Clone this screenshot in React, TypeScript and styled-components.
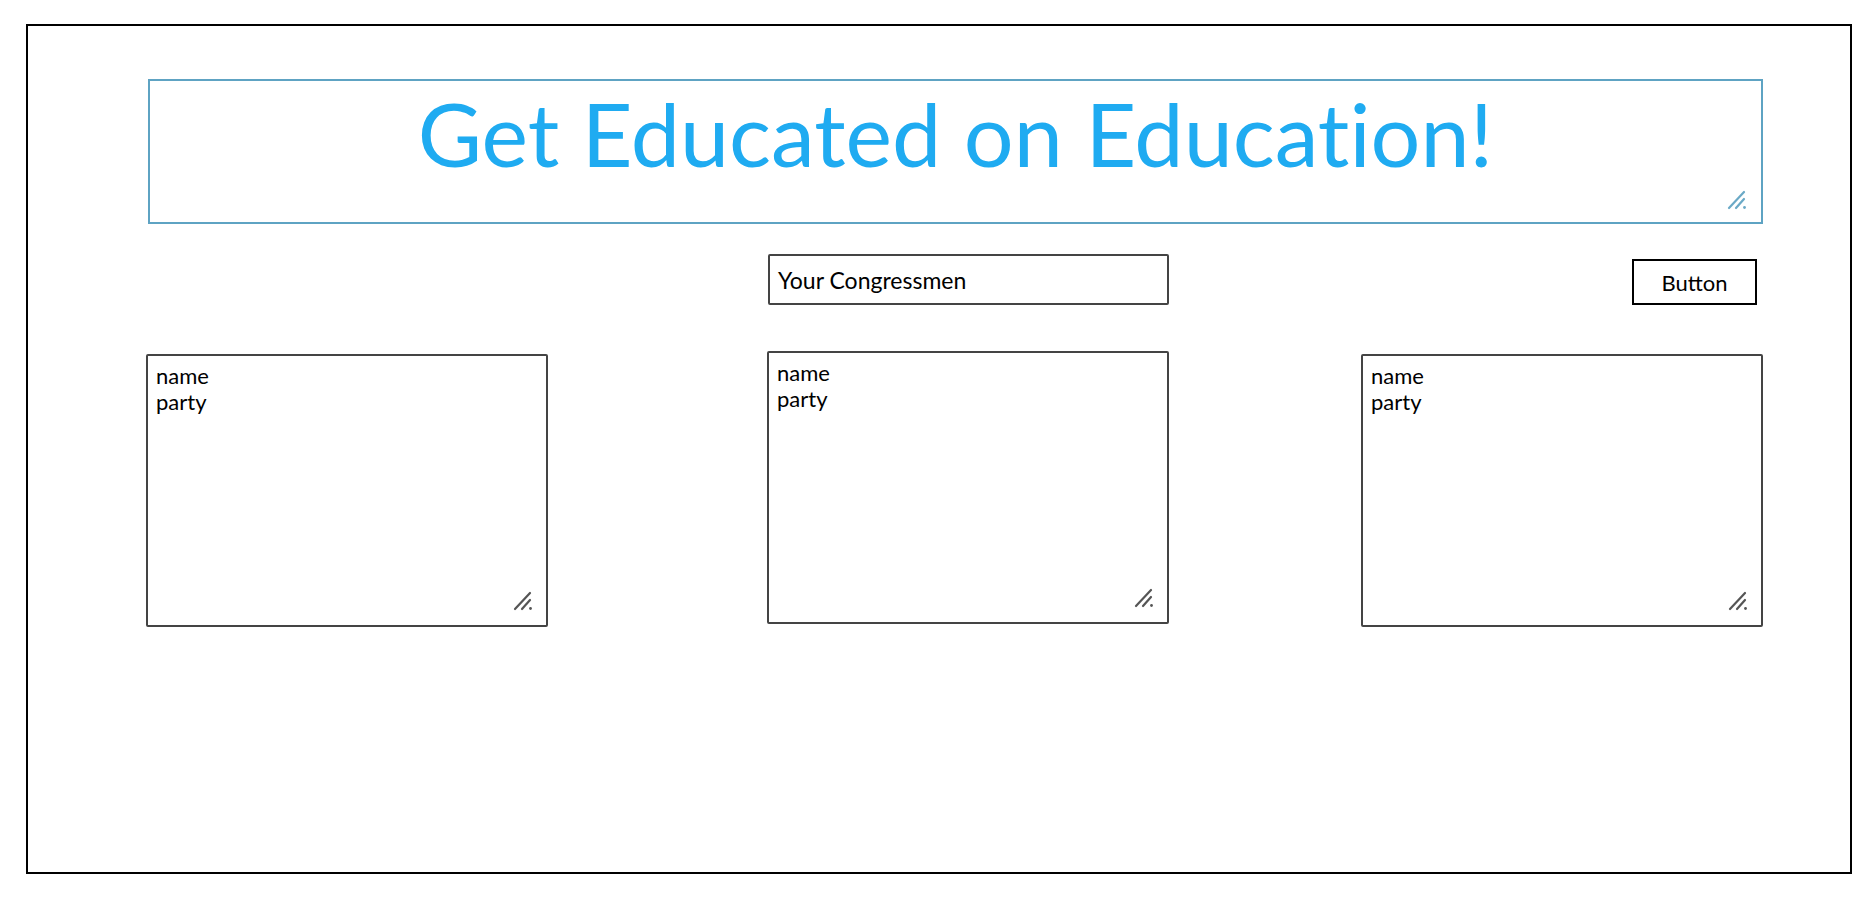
import React from "react";
import styled, { createGlobalStyle } from "styled-components";

const Global = createGlobalStyle`
  html, body { margin: 0; padding: 0; background: #fff; }
  body {
    font-family: Lato, "Noto Sans", sans-serif;
    color: #000;
    font-variant-ligatures: none;
    font-feature-settings: "liga" 0;
  }
`;

const Page = styled.div`
  padding: 24px 20px 34px 26px;
`;

const Frame = styled.div`
  box-sizing: border-box;
  width: 1826px;
  height: 850px;
  border: 2px solid #000;
  padding: 53px 0 0 118px;
  display: flex;
  flex-direction: column;
`;

const Content = styled.div`
  width: 1617px;
  display: flex;
  flex-direction: column;
`;

const Header = styled.div`
  position: relative;
  box-sizing: border-box;
  margin-left: 2px;
  width: 1615px;
  height: 145px;
  border: 2px solid #5ea3c3;
  display: flex;
  justify-content: center;
`;

const Title = styled.h1`
  margin: 0;
  font-family: Lato, "Noto Sans", sans-serif;
  font-weight: 400;
  font-size: 88px;
  line-height: 1.2;
  color: #1fabf1;
  font-variant-ligatures: none;
  font-feature-settings: "liga" 0;
`;

const Grip = styled.svg<{ $right: number; $bottom: number }>`
  position: absolute;
  right: ${(p) => p.$right}px;
  bottom: ${(p) => p.$bottom}px;
  width: 20px;
  height: 20px;
`;

const ControlsRow = styled.div`
  margin-top: 30px;
  height: 51px;
  display: flex;
  align-items: flex-end;
`;

const SearchBox = styled.div`
  box-sizing: border-box;
  margin-left: 622px;
  width: 401px;
  height: 51px;
  border: 2px solid #444;
  border-radius: 2px;
  padding-left: 8px;
  display: flex;
  align-items: center;
  font-size: 23px;
`;

const Button = styled.button`
  box-sizing: border-box;
  margin-left: auto;
  margin-right: 6px;
  width: 125px;
  height: 46px;
  border: 2px solid #000;
  border-radius: 0;
  background: #fff;
  font-family: Lato, "Noto Sans", sans-serif;
  font-size: 22px;
  color: #000;
  padding: 0;
`;

const CardsRow = styled.div`
  margin-top: 46px;
  display: flex;
  align-items: flex-start;
`;

const Card = styled.div<{ $offsetX: number; $offsetY: number }>`
  position: relative;
  box-sizing: border-box;
  margin-left: ${(p) => p.$offsetX}px;
  margin-top: ${(p) => p.$offsetY}px;
  width: 402px;
  height: 273px;
  border: 2px solid #444;
  border-radius: 2px;
  padding: 7px 8px;
  font-size: 22px;
  line-height: 1.2;
`;

const Line = styled.div``;

function ResizeGrip({ color, right, bottom }: { color: string; right: number; bottom: number }) {
  return (
    <Grip $right={right} $bottom={bottom} viewBox="0 0 20 20">
      <line x1="2" y1="18" x2="17" y2="2" stroke={color} strokeWidth="2.2" strokeLinecap="round" />
      <line x1="9" y1="18" x2="17" y2="9" stroke={color} strokeWidth="2.2" strokeLinecap="round" />
      <circle cx="17.5" cy="17.5" r="1.4" fill={color} />
    </Grip>
  );
}

const cards = [
  { x: 0, y: 3 },
  { x: 219, y: 0 },
  { x: 192, y: 3 },
];

export default function App() {
  return (
    <>
      <Global />
      <Page>
        <Frame>
          <Content>
            <Header>
              <Title>Get Educated on Education!</Title>
              <ResizeGrip color="#6aa9c6" right={14} bottom={12} />
            </Header>
            <ControlsRow>
              <SearchBox>Your Congressmen</SearchBox>
              <Button>Button</Button>
            </ControlsRow>
            <CardsRow>
              {cards.map((c, i) => (
                <Card key={i} $offsetX={c.x} $offsetY={c.y}>
                  <Line>name</Line>
                  <Line>party</Line>
                  <ResizeGrip color="#555" right={13} bottom={14} />
                </Card>
              ))}
            </CardsRow>
          </Content>
        </Frame>
      </Page>
    </>
  );
}
